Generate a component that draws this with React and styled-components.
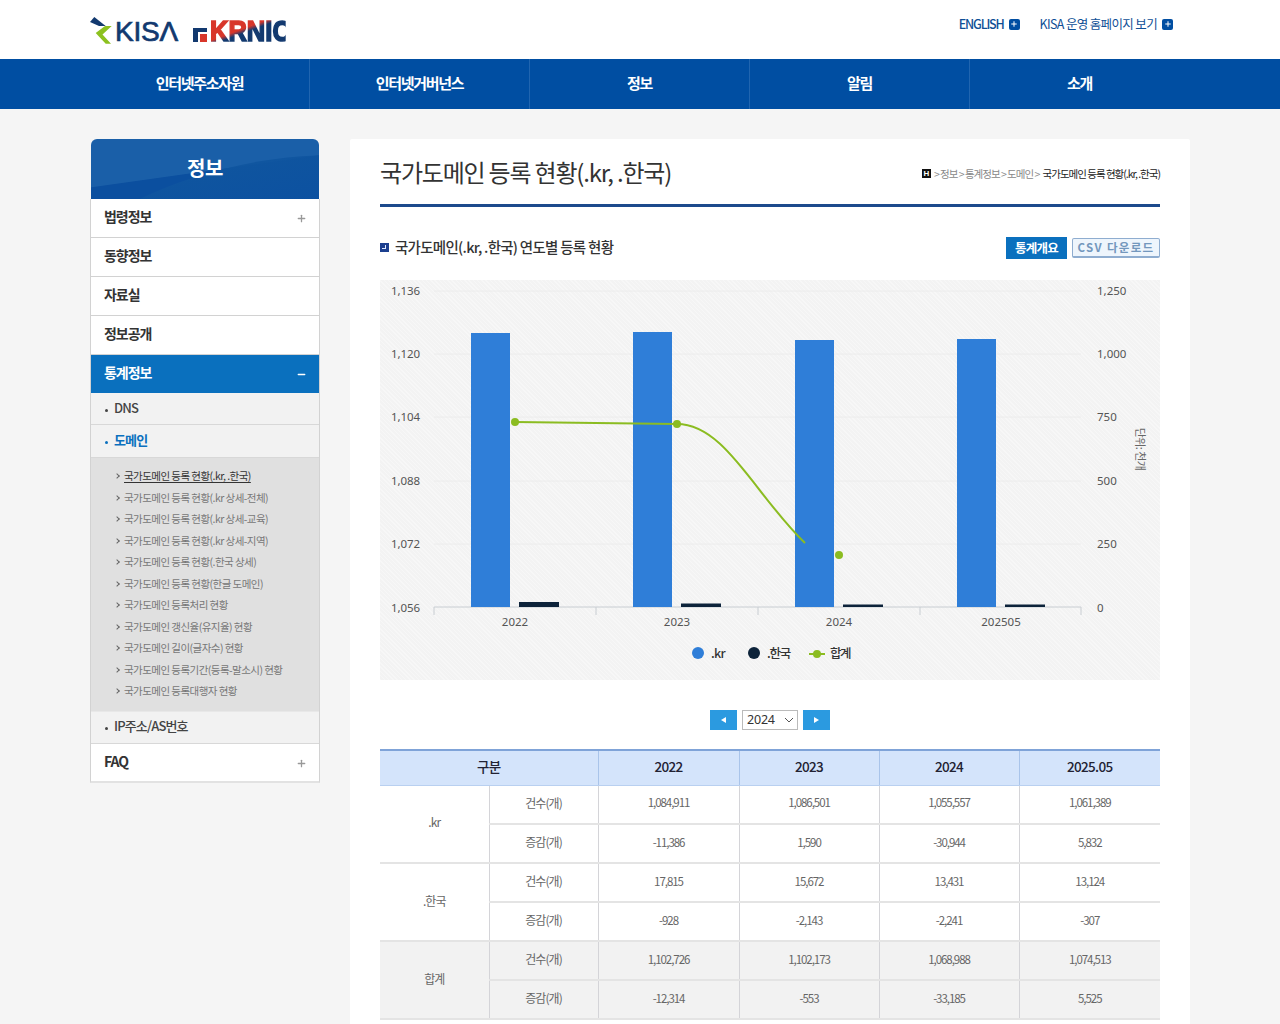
import React from "react";
import styled, { createGlobalStyle } from "styled-components";
import { Plus, Minus } from "lucide-react";

const Global = createGlobalStyle`
  html, body { margin: 0; padding: 0; background: #f5f5f5; }
  body { font-family: "Noto Sans CJK KR", "Noto Sans", sans-serif; color: #333; overflow-x: hidden; }
  * { box-sizing: border-box; }
  ul { margin: 0; padding: 0; list-style: none; }
`;

const TopBar = styled.header`
  height: 59px; background: #fff; display: flex; justify-content: space-between;
  padding: 0 107px 0 90px;
`;
const Logos = styled.div`display: flex; align-items: center; height: 59px; padding-top: 3px;`;
const KisaMark = styled.svg`width: 26px; height: 29px; flex: none; margin: -3px -1px 0 0;`;
const KisaText = styled.span`
  font: 400 28px/29px "Liberation Sans", sans-serif; color: #12396f; letter-spacing: -0.2px; width: 66px;
  -webkit-text-stroke: 0.7px #12396f; white-space: nowrap;
`;
const KrnicMark = styled.svg`width: 14px; height: 14px; margin: 8px 3px 0 12px; flex: none;`;
const KrnicText = styled.span`
  font: 700 29px/29px "Liberation Sans", sans-serif; letter-spacing: 0; width: 86px; white-space: nowrap;
  -webkit-text-stroke: 1.6px transparent;
  background: linear-gradient(162deg, #d8362a 0 42%, #12396f 50% 100%);
  -webkit-background-clip: text; background-clip: text; color: transparent;
  transform: scaleX(.88); transform-origin: left;
`;
const TopLinks = styled.div`display: flex; gap: 20px; padding-top: 14px; height: 40px;`;
const TopLink = styled.a`
  display: flex; align-items: center; gap: 5px; height: 19px;
  font-size: 12.5px; letter-spacing: -${p => p.$bold ? 1.2 : 0.65}px; color: #0f4f96; font-weight: ${p => p.$bold ? 500 : 400}; white-space: nowrap;
`;
const PlusBox = styled.span`
  width: 11px; height: 11px; border-radius: 2px; background: #004ea2; color: #fff; margin-top: 1px;
  display: inline-flex; align-items: center; justify-content: center;
`;

const Nav = styled.nav`height: 50px; background: #004ea2; padding-left: 90px; display: flex;`;
const NavItem = styled.div`
  width: 220px; height: 50px; display: flex; align-items: center; justify-content: center; padding-bottom: 3px;
  color: #fff; font-size: 15px; font-weight: 700; letter-spacing: -1.3px;
  border-right: 1px solid ${p => p.$last ? "transparent" : "#2065b0"};
`;

const Main = styled.main`display: flex; gap: 30px; padding: 30px 90px 0; width: 1280px;`;
const Side = styled.aside`width: 230px; flex: none;`;
const SideTitle = styled.div`
  height: 60px; margin: 0 1px; border-radius: 6px 6px 0 0; color: #fff; font-size: 20px; font-weight: 700;
  display: flex; align-items: center; justify-content: center; padding: 0 0 4px 0; letter-spacing: -0.5px;
  position: relative; overflow: hidden;
  background: linear-gradient(172deg, #1a5fa8 0 52%, #0b4f9f 53%, #0b4f9f 100%);
  &::after {
    content: ""; position: absolute; width: 330px; height: 110px; left: -18px; top: 28px; border-radius: 50%;
    background: linear-gradient(180deg, #0f559f, #0a4ea3); transform: rotate(-14deg); opacity: .9;
  }
  & > span { position: relative; z-index: 1; }
`;
const SideBox = styled.div`border: 1px solid #d2d2d2; border-width: 0 1px 2px; border-bottom-color: #e2e2e2; background: #fff;`;
const TopRow = styled.div`
  height: ${p => p.$h || 39}px; padding: 0 12px ${p => p.$active ? 3 : 5}px 13px; display: flex; align-items: center; justify-content: space-between;
  font-size: 14px; font-weight: 700; letter-spacing: -1.05px; color: ${p => p.$active ? "#fff" : "#333"};
  background: ${p => p.$active ? "#0a70be" : "#fff"};
  border-bottom: 1px solid ${p => p.$active ? "#0a70be" : "#d2d2d2"};
  &:last-child { border-bottom: 0; padding-bottom: 3px; }
  & svg { color: ${p => p.$active ? "#fff" : "#999"}; margin-top: 5px; }
`;
const SubRow = styled.div`
  height: ${p => p.$h}px; padding: 0 0 3px 14px; display: flex; align-items: center; gap: 6px;
  background: #f2f2f2; border-bottom: 1px solid #d8d8d8;
  font-size: 13px; font-weight: ${p => p.$on ? 700 : 500}; letter-spacing: -0.85px; color: ${p => p.$on ? "#0a70be" : "#444"};
  &::before { content: ""; width: 3px; height: 3px; background: currentColor; border-radius: 50%; margin-top: 6px; }
`;
const DeepList = styled.ul`background: #e0e0e0; padding: 7px 0 9px 24px; border-bottom: 1px solid #e8e8e8;`;
const DeepItem = styled.li`
  height: 21.5px; display: flex; align-items: center; gap: 5px;
  font-size: 10.5px; letter-spacing: -0.55px; color: ${p => p.$on ? "#333" : "#777"}; white-space: nowrap;
  &::before { content: ""; width: 3px; height: 3px; border: solid #666; border-width: 1px 1px 0 0; transform: rotate(45deg); margin-top: 1px; }
  & > span { text-decoration: ${p => p.$on ? "underline" : "none"}; text-underline-offset: 2px; }
`;

const Content = styled.section`width: 840px; flex: none; background: #fff; padding: 0 30px 40px; border-radius: 2px;`;
const TitleRow = styled.div`
  height: 68px; display: flex; justify-content: space-between; align-items: center;
  border-bottom: 3px solid #1c4a8c; padding-bottom: 1px;
`;
const PageTitle = styled.h1`margin: 0; font-size: 24px; font-weight: 400; letter-spacing: -1.2px; color: #333; white-space: nowrap;`;
const Crumbs = styled.div`display: flex; align-items: center; font-size: 10.5px; letter-spacing: -1px; color: #888; white-space: pre; gap: 2px; margin-top: 5px;`;
const HomeIcon = styled.span`
  width: 9px; height: 9px; background: #111; color: #fff; font: 700 8px/9px "Liberation Sans", sans-serif;
  text-align: center; letter-spacing: 0; margin-right: 1px;
`;
const Current = styled.span`color: #222;`;
const SectionRow = styled.div`height: 73px; display: flex; justify-content: space-between; align-items: center; padding-top: 9px;`;
const SectionTitle = styled.h2`
  margin: 0 0 4px; display: flex; align-items: center; gap: 6px;
  font-size: 14.5px; font-weight: 500; letter-spacing: -0.72px; color: #333; white-space: nowrap;
`;
const Bullet = styled.span`
  width: 9px; height: 9px; background: #1c3f8f; position: relative; margin-top: 3px;
  &::after { content: ""; position: absolute; left: 2px; top: 2px; width: 3px; height: 3px; border: solid #dfe8ff; border-width: 0 1px 1px 0; }
`;
const BtnGroup = styled.div`display: flex; gap: 5px; align-items: center;`;
const BlueBtn = styled.a`
  width: 61px; height: 22px; padding-bottom: 2px; background: #0a70be; color: #fff; font-size: 12.5px; font-weight: 700; letter-spacing: -0.7px;
  display: flex; align-items: center; justify-content: center;
`;
const CsvBtn = styled.a`
  width: 88px; height: 20px; padding-bottom: 1px; background: #eef5fc; color: #7397bd; font-size: 11.5px; font-weight: 700; letter-spacing: 1.3px;
  display: flex; align-items: center; justify-content: center; border: 1px solid #8fadd0; border-bottom-width: 2px; border-radius: 2px; white-space: nowrap;
`;
const ChartWrap = styled.div`
  height: 400px; background: #f3f3f3;
  background-image: repeating-linear-gradient(45deg, rgba(255,255,255,.35) 0 1px, transparent 1px 3px);
`;
const ChartSvg = styled.svg`display: block; width: 780px; height: 400px; font-family: "Noto Sans", sans-serif;`;

const Pager = styled.div`height: 69px; display: flex; align-items: flex-start; justify-content: center; gap: 5px; padding-top: 30px;`;
const PageBtn = styled.button`
  width: 27px; height: 20px; padding: 0; border: 0; background: #2b9ae0; display: flex; align-items: center; justify-content: center;
  &::after {
    content: ""; width: 0; height: 0; border: solid transparent; border-width: 3px 0 3px 5px; border-left-color: #fff;
    transform: ${p => p.$prev ? "scaleX(-1)" : "none"};
  }
`;
const YearSelect = styled.select`
  width: 56px; height: 20px; padding: 0 0 2px 4px; border: 1px solid #bbb; color: #333; appearance: none; border-radius: 0;
  font: 400 12.5px "Noto Sans", sans-serif; letter-spacing: -0.2px;
  background: #fff url("data:image/svg+xml,%3Csvg xmlns='http://www.w3.org/2000/svg' width='10' height='6'%3E%3Cpath d='M1 1l4 4 4-4' fill='none' stroke='%23555' stroke-width='1'/%3E%3C/svg%3E") no-repeat right 3px center;
`;

const Table = styled.table`
  width: 780px; border-collapse: collapse; table-layout: fixed; border-top: 2px solid #7fa3d8;
`;
const Th = styled.th`
  height: 35px; background: #d4e4fb; font-size: 13.5px; font-weight: 500; color: #223; letter-spacing: -0.7px;
  border-left: 1px solid #a9c4ea; border-bottom: 1px solid #b9d0f0; padding: 0 0 3px;
  &:first-child { border-left: 0; }
`;
const Td = styled.td`
  height: 39px; padding: 0 0 4px; text-align: center; font-size: ${p => p.$num ? 11.5 : 12}px; color: #666;
  letter-spacing: ${p => p.$num ? -1.05 : -0.95}px;
  background: ${p => p.$sum ? "#f2f2f2" : "#fff"};
  border-left: 1px solid #d4d4d8; border-bottom: 2px solid #e4e4e4;
  &:first-child { border-left: ${p => p.$first ? 0 : "1px solid #d4d4d8"}; }
`;

const menuTop = ["법령정보", "동향정보", "자료실", "정보공개"];
const deep = [
  "국가도메인 등록 현황(.kr, .한국)", "국가도메인 등록 현황(.kr 상세-전체)", "국가도메인 등록 현황(.kr 상세-교육)",
  "국가도메인 등록 현황(.kr 상세-지역)", "국가도메인 등록 현황(.한국 상세)", "국가도메인 등록 현황(한글 도메인)",
  "국가도메인 등록처리 현황", "국가도메인 갱신율(유지율) 현황", "국가도메인 길이(글자수) 현황",
  "국가도메인 등록기간(등록-말소시) 현황", "국가도메인 등록대행자 현황",
];
const rows = [
  { name: ".kr", a: ["1,084,911", "1,086,501", "1,055,557", "1,061,389"], b: ["-11,386", "1,590", "-30,944", "5,832"] },
  { name: ".한국", a: ["17,815", "15,672", "13,431", "13,124"], b: ["-928", "-2,143", "-2,241", "-307"] },
  { name: "합계", a: ["1,102,726", "1,102,173", "1,068,988", "1,074,513"], b: ["-12,314", "-553", "-33,185", "5,525"], sum: true },
];

const gridY = [11, 74, 137, 201, 264, 327];
const labelY = [15, 78, 141, 205, 268, 332];
const leftLabels = ["1,136", "1,120", "1,104", "1,088", "1,072", "1,056"];
const rightLabels = ["1,250", "1,000", "750", "500", "250", "0"];
const groups = [
  { label: "2022", x: 135, kr: 53, ko: 322 },
  { label: "2023", x: 297, kr: 52, ko: 323.5 },
  { label: "2024", x: 459, kr: 60, ko: 324.5 },
  { label: "202505", x: 621, kr: 59, ko: 324.5 },
];
const KR = "Noto Sans CJK KR, sans-serif";

function Chart() {
  return (
    <ChartSvg viewBox="0 0 780 400">
      {gridY.map(y => <line key={y} x1="54" x2="701" y1={y} y2={y} stroke={y === 327 ? "#c8cdd2" : "#ececec"} strokeWidth="1" />)}
      {[54, 216, 378, 540, 701].map(x => <line key={x} x1={x} x2={x} y1="327" y2="335" stroke="#c8cdd2" />)}
      {leftLabels.map((t, i) => <text key={t} x="11" y={labelY[i]} fontSize="11.5" fill="#555" letterSpacing="-0.1">{t}</text>)}
      {rightLabels.map((t, i) => <text key={t} x="717" y={labelY[i]} fontSize="11.5" fill="#555">{t}</text>)}
      {groups.map(g => (
        <g key={g.label}>
          <rect x={g.x - 44} y={g.kr} width="39" height={327 - g.kr} fill="#2f7ed8" />
          <rect x={g.x + 4} y={g.ko} width="40" height={327 - g.ko} fill="#0d233a" />
          <text x={g.x} y="346" fontSize="11.5" fill="#555" textAnchor="middle">{g.label}</text>
        </g>
      ))}
      <path d="M135,142 L297,144 C345,144 375,215 425,263" fill="none" stroke="#8bbc21" strokeWidth="2" />
      <circle cx="135" cy="142" r="4" fill="#8bbc21" />
      <circle cx="297" cy="144" r="4" fill="#8bbc21" />
      <circle cx="459" cy="275" r="4" fill="#8bbc21" />
      <text x="0" y="0" fontSize="11" fill="#666" textAnchor="middle" transform="translate(756,169) rotate(90)" fontFamily={KR} letterSpacing="-0.6">단위: 천개</text>
      <circle cx="318" cy="373" r="6" fill="#2f7ed8" />
      <text x="331" y="378" fontSize="12.5" fontWeight="500" fill="#333" fontFamily={KR} letterSpacing="-0.7">.kr</text>
      <circle cx="374" cy="373" r="6" fill="#0d233a" />
      <text x="387" y="378" fontSize="12.5" fontWeight="500" fill="#333" fontFamily={KR} letterSpacing="-1.3">.한국</text>
      <line x1="429" x2="445" y1="374" y2="374" stroke="#8bbc21" strokeWidth="2" />
      <circle cx="437" cy="374" r="4" fill="#8bbc21" />
      <text x="450" y="378" fontSize="12.5" fontWeight="500" fill="#333" fontFamily={KR} letterSpacing="-1.5">합계</text>
    </ChartSvg>
  );
}

export default function App() {
  return (
    <>
      <Global />
      <TopBar>
        <Logos>
          <KisaMark viewBox="0 0 26 29">
            <polygon points="0,7 4.3,2 15.7,11 9,11" fill="#12396f" />
            <polygon points="21.7,11 15,11 5.7,18 15.7,28.7 21,28.7 12.5,19.5" fill="#8cc11f" />
          </KisaMark>
          <KisaText>KISΛ</KisaText>
          <KrnicMark viewBox="0 0 14 14">
            <path d="M0 0H14V4H5V14H0Z" fill="#12396f" />
            <rect x="7" y="6" width="7" height="8" fill="#d8362a" />
          </KrnicMark>
          <KrnicText>KRNIC</KrnicText>
        </Logos>
        <TopLinks>
          <TopLink $bold>ENGLISH <PlusBox><Plus size={8} strokeWidth={3} /></PlusBox></TopLink>
          <TopLink>KISA 운영 홈페이지 보기 <PlusBox><Plus size={8} strokeWidth={3} /></PlusBox></TopLink>
        </TopLinks>
      </TopBar>
      <Nav>
        {["인터넷주소자원", "인터넷거버넌스", "정보", "알림", "소개"].map((t, i) => (
          <NavItem key={t} $last={i === 4}>{t}</NavItem>
        ))}
      </Nav>
      <Main>
        <Side>
          <SideTitle><span>정보</span></SideTitle>
          <SideBox>
            {menuTop.map((t, i) => (
              <TopRow key={t}>{t}{i === 0 && <Plus size={11} strokeWidth={2.8} />}</TopRow>
            ))}
            <TopRow $active $h={38}>통계정보<Minus size={11} strokeWidth={3} /></TopRow>
            <SubRow $h={32}>DNS</SubRow>
            <SubRow $h={33} $on>도메인</SubRow>
            <DeepList>
              {deep.map((t, i) => <DeepItem key={t} $on={i === 0}><span>{t}</span></DeepItem>)}
            </DeepList>
            <SubRow $h={32}>IP주소/AS번호</SubRow>
            <TopRow $h={37}>FAQ<Plus size={11} strokeWidth={2.8} /></TopRow>
          </SideBox>
        </Side>
        <Content>
          <TitleRow>
            <PageTitle>국가도메인 등록 현황(.kr, .한국)</PageTitle>
            <Crumbs>
              <HomeIcon>H</HomeIcon>{"> 정보 > 통계정보 > 도메인 > "}<Current>국가도메인 등록 현황(.kr, .한국)</Current>
            </Crumbs>
          </TitleRow>
          <SectionRow>
            <SectionTitle><Bullet />국가도메인(.kr, .한국) 연도별 등록 현황</SectionTitle>
            <BtnGroup>
              <BlueBtn>통계개요</BlueBtn>
              <CsvBtn>CSV 다운로드</CsvBtn>
            </BtnGroup>
          </SectionRow>
          <ChartWrap><Chart /></ChartWrap>
          <Pager>
            <PageBtn $prev aria-label="이전" />
            <YearSelect defaultValue="2024"><option>2024</option></YearSelect>
            <PageBtn aria-label="다음" />
          </Pager>
          <Table>
            <colgroup>
              <col style={{ width: 109 }} /><col style={{ width: 109 }} />
              <col style={{ width: 141 }} /><col style={{ width: 140 }} /><col style={{ width: 140 }} /><col style={{ width: 141 }} />
            </colgroup>
            <thead>
              <tr>
                <Th colSpan={2}>구분</Th>
                {["2022", "2023", "2024", "2025.05"].map(y => <Th key={y}>{y}</Th>)}
              </tr>
            </thead>
            <tbody>
              {rows.map(r => (
                <React.Fragment key={r.name}>
                  <tr>
                    <Td rowSpan={2} $first $sum={r.sum}>{r.name}</Td>
                    <Td $sum={r.sum}>건수(개)</Td>
                    {r.a.map((v, i) => <Td key={i} $num $sum={r.sum}>{v}</Td>)}
                  </tr>
                  <tr>
                    <Td $sum={r.sum}>증감(개)</Td>
                    {r.b.map((v, i) => <Td key={i} $num $sum={r.sum}>{v}</Td>)}
                  </tr>
                </React.Fragment>
              ))}
            </tbody>
          </Table>
        </Content>
      </Main>
    </>
  );
}
